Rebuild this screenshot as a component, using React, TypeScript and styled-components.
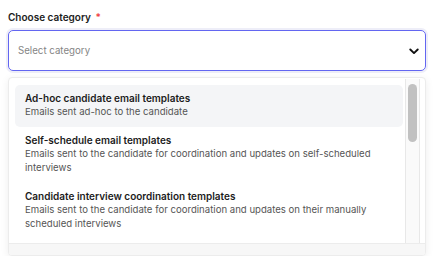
import React from 'react';
import styled, { createGlobalStyle } from 'styled-components';

const GlobalStyle = createGlobalStyle`
  html, body {
    margin: 0;
    padding: 0;
    background: #ffffff;
    font-family: Inter, 'Noto Sans', sans-serif;
    -webkit-font-smoothing: antialiased;
  }
`;

type Category = {
  title: string;
  description: string;
};

const categories: Category[] = [
  {
    title: 'Ad-hoc candidate email templates',
    description: 'Emails sent ad-hoc to the candidate',
  },
  {
    title: 'Self-schedule email templates',
    description:
      'Emails sent to the candidate for coordination and updates on self-scheduled interviews',
  },
  {
    title: 'Candidate interview coordination templates',
    description:
      'Emails sent to the candidate for coordination and updates on their manually scheduled interviews',
  },
];

const App: React.FC = () => {
  return (
    <Wrapper>
      <GlobalStyle />
      <Label>
        Choose category <Required>*</Required>
      </Label>
      <SelectBox>
        <Placeholder>Select category</Placeholder>
        <svg width='10' height='7' viewBox='0 0 10 7' fill='none'>
          <path
            d='M1.3 1.5L5 5.1L8.7 1.5'
            stroke='#111'
            strokeWidth='1.9'
            strokeLinecap='round'
            strokeLinejoin='round'
          />
        </svg>
      </SelectBox>
      <Menu>
        <ListArea>
          <Options>
            {categories.map((c, i) => (
              <Option key={c.title} active={i === 0}>
                <OptionTitle>{c.title}</OptionTitle>
                <OptionText>{c.description}</OptionText>
              </Option>
            ))}
          </Options>
          <ScrollTrack>
            <ScrollThumb />
          </ScrollTrack>
        </ListArea>
        <MenuFooter />
      </Menu>
    </Wrapper>
  );
};

const Wrapper = styled.div`
  padding: 10px 17px 0 8px;
  display: flex;
  flex-direction: column;
  height: 256px;
  box-sizing: border-box;
  overflow: hidden;
`;

const Label = styled.label`
  font-size: 10px;
  line-height: 14px;
  font-weight: 600;
  color: #1c1c1c;
  margin-bottom: 6px;
`;

const Required = styled.span`
  color: #ef4444;
  margin-left: 2px;
`;

const SelectBox = styled.div`
  height: 41px;
  box-sizing: border-box;
  border: 1px solid #6366f1;
  border-radius: 5px;
  box-shadow: 0 0 0 2px #eeeef8;
  display: flex;
  align-items: center;
  justify-content: space-between;
  padding: 0 6px 0 9px;

  svg {
    margin-top: 1px;
  }
`;

const Placeholder = styled.span`
  font-size: 9.7px;
  color: #858585;
`;

const Menu = styled.div`
  margin-top: 6px;
  border: 1px solid #ececec;
  border-radius: 4px;
  box-shadow: 0 2px 8px rgba(0, 0, 0, 0.07);
  background: #ffffff;
  padding: 1px 5px 0 6px;
  display: flex;
  flex-direction: column;
  flex: 1;
  overflow: hidden;
`;

const ListArea = styled.div`
  height: 164px;
  flex-shrink: 0;
  display: flex;
  gap: 2px;
`;

const Options = styled.div`
  flex: 1;
  overflow: hidden;
  padding-top: 6px;
`;

const Option = styled.div<{ active?: boolean }>`
  padding: 6px 10px 8px;
  border-radius: 5px;
  background: ${(p) => (p.active ? '#f4f5f7' : 'transparent')};
`;

const OptionTitle = styled.div`
  font-size: 10px;
  line-height: 14px;
  font-weight: 600;
  color: #1c1c1c;
`;

const OptionText = styled.div`
  font-size: 9.6px;
  line-height: 14px;
  color: #555555;
`;

const ScrollTrack = styled.div`
  width: 15px;
  box-sizing: border-box;
  background: #fafafa;
  border-left: 1px solid #e8e8e8;
  border-right: 1px solid #e8e8e8;
  padding: 5px 2px 0;
`;

const ScrollThumb = styled.div`
  height: 58px;
  border-radius: 5px;
  background: #c1c1c1;
`;

const MenuFooter = styled.div`
  flex: 1;
  margin: 0 -5px 0 -6px;
  border-top: 1px solid #ececec;
  background: #f7f7f7;
`;

export default App;
